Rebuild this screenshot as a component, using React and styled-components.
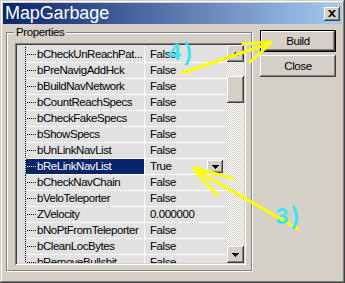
import React from "react";
import styled, { createGlobalStyle, css } from "styled-components";

const Global = createGlobalStyle`
  html, body { margin: 0; padding: 0; background: #D4D0C8; }
  body { font-family: "Liberation Sans", Arial, sans-serif; }
`;

const raised = css`
  box-shadow: inset -1px -1px #404040, inset 1px 1px #ffffff,
    inset -2px -2px #808080, inset 2px 2px #d4d0c8;
`;

const Window = styled.div`
  position: relative;
  width: 345px;
  height: 283px;
  box-sizing: border-box;
  padding: 3px;
  background: #d4d0c8;
  box-shadow: inset -1px -1px #404040, inset 1px 1px #d4d0c8,
    inset -2px -2px #808080, inset 2px 2px #ffffff;
  display: flex;
  flex-direction: column;
  overflow: hidden;
`;

const TitleBar = styled.div`
  height: 21px;
  display: flex;
  align-items: center;
  justify-content: space-between;
  padding: 0 2px 0 2px;
  background: linear-gradient(to right, #0a246a, #a6caf0);
`;

const TitleText = styled.span`
  color: #ffffff;
  font-size: 18px;
  line-height: 21px;
  letter-spacing: -0.1px;
`;

const CloseBox = styled.div`
  width: 16px;
  height: 14px;
  background: #d4d0c8;
  ${raised};
  display: flex;
  align-items: center;
  justify-content: center;
`;

const Body = styled.div`
  flex: 1;
  display: flex;
  align-items: flex-start;
  gap: 8px;
  padding: 6px 0 0 3px;
`;

const Group = styled.div`
  position: relative;
  margin-top: 2px;
  width: 246px;
  height: 239px;
  box-sizing: border-box;
  border: 1px solid #808080;
  box-shadow: inset 1px 1px #ffffff, 1px 1px #ffffff;
  padding: 10px 5px 5px 8px;
`;

const GroupLabel = styled.span`
  position: absolute;
  top: -8px;
  left: 7px;
  padding: 0 2px;
  background: #d4d0c8;
  font-size: 11.5px;
  line-height: 14px;
  letter-spacing: -0.4px;
  color: #000;
`;

const ListBox = styled.div`
  width: 231px;
  height: 222px;
  box-sizing: border-box;
  padding: 2px;
  background: #e1e1e1;
  box-shadow: inset 1px 1px #808080, inset -1px -1px #ffffff,
    inset 2px 2px #404040, inset -2px -2px #d4d0c8;
  display: flex;
`;

const Rows = styled.div`
  flex: 1;
  overflow: hidden;
  padding-top: 2px;
  background: #e1e1e1;
`;

const Row = styled.div`
  display: flex;
  height: 16px;
  font-size: 11.5px;
  letter-spacing: -0.45px;
  line-height: 15px;
`;

const Gutter = styled.div`
  width: 8px;
  flex: none;
`;

const TreeLine = styled.div`
  width: 1px;
  flex: none;
  background-color: ${(p) => (p.$sel ? "#0a246a" : "transparent")};
  background-image: repeating-linear-gradient(
    to bottom,
    ${(p) => (p.$sel ? "#ffffff" : "#000000")} 0 1px,
    transparent 1px 2px
  );
`;

const NameCell = styled.div`
  width: 107px;
  flex: none;
  box-sizing: content-box;
  height: 15px;
  padding-left: 11px;
  border-bottom: 1px solid #ffffff;
  border-right: 1px solid #ffffff;
  white-space: nowrap;
  overflow: hidden;
  color: ${(p) => (p.$sel ? "#ffffff" : "#000000")};
  background-color: ${(p) => (p.$sel ? "#0a246a" : "#e1e1e1")};
  background-image: repeating-linear-gradient(
    to right,
    transparent 0 1px,
    ${(p) => (p.$sel ? "#ffffff" : "#000000")} 1px 2px
  );
  background-size: 10px 1px;
  background-position: 0 7px;
  background-repeat: no-repeat;
`;

const ValueCell = styled.div`
  flex: 1;
  height: 15px;
  padding: 0 4px 0 5px;
  border-bottom: 1px solid #ffffff;
  display: flex;
  align-items: center;
  justify-content: space-between;
  color: #000;
  white-space: nowrap;
`;

const DropButton = styled.div`
  width: 16px;
  height: 13px;
  margin-top: 1px;
  align-self: flex-start;
  background: #d4d0c8;
  ${raised};
  display: flex;
  align-items: center;
  justify-content: center;
`;

const ScrollBar = styled.div`
  width: 17px;
  flex: none;
  display: flex;
  flex-direction: column;
`;

const ScrollButton = styled.div`
  width: 17px;
  height: 17px;
  flex: none;
  background: #d4d0c8;
  ${raised};
  display: flex;
  align-items: center;
  justify-content: center;
`;

const Track = styled.div`
  flex: 1;
  background-color: #ffffff;
  background-image: conic-gradient(
    #d4d0c8 25%,
    #ffffff 0 50%,
    #d4d0c8 0 75%,
    #ffffff 0
  );
  background-size: 2px 2px;
`;

const Thumb = styled.div`
  margin-top: 14px;
  height: 27px;
  background: #d4d0c8;
  ${raised};
`;

const ButtonColumn = styled.div`
  display: flex;
  flex-direction: column;
  gap: 3px;
  width: 76px;
`;

const PushButton = styled.button`
  width: 76px;
  height: 22px;
  padding: 0;
  margin: 0;
  box-sizing: border-box;
  font-family: "Liberation Sans", Arial, sans-serif;
  font-size: 11.5px;
  letter-spacing: -0.4px;
  color: #000;
  background: #d4d0c8;
  border: ${(p) => (p.$default ? "1px solid #000" : "none")};
  ${raised};
`;

const Overlay = styled.svg`
  position: absolute;
  left: 0;
  top: 0;
  pointer-events: none;
`;

const Note = styled.span`
  position: absolute;
  left: ${(p) => p.$x}px;
  top: ${(p) => p.$y}px;
  font-family: "Liberation Mono", "DejaVu Sans Mono", monospace;
  font-weight: bold;
  font-size: 23px;
  line-height: 22px;
  letter-spacing: -1px;
  color: #3fe4f2;
  pointer-events: none;
`;

const rows = [
  ["bCheckUnReachPat...", "False"],
  ["bPreNavigAddHck", "False"],
  ["bBuildNavNetwork", "False"],
  ["bCountReachSpecs", "False"],
  ["bCheckFakeSpecs", "False"],
  ["bShowSpecs", "False"],
  ["bUnLinkNavList", "False"],
  ["bReLinkNavList", "True", true],
  ["bCheckNavChain", "False"],
  ["bVeloTeleporter", "False"],
  ["ZVelocity", "0.000000"],
  ["bNoPtFromTeleporter", "False"],
  ["bCleanLocBytes", "False"],
  ["bRemoveBullshit", "False"],
];

const Down = () => (
  <svg width="7" height="4" viewBox="0 0 7 4">
    <path d="M0 0h7v1H0zM1 1h5v1H1zM2 2h3v1H2zM3 3h1v1H3z" fill="#000" />
  </svg>
);

const Up = () => (
  <svg width="7" height="4" viewBox="0 0 7 4">
    <path d="M3 0h1v1H3zM2 1h3v1H2zM1 2h5v1H1zM0 3h7v1H0z" fill="#000" />
  </svg>
);

export default function App() {
  return (
    <>
      <Global />
      <Window>
        <TitleBar>
          <TitleText>MapGarbage</TitleText>
          <CloseBox>
            <svg width="8" height="7" viewBox="0 0 8 7">
              <path
                d="M0 0h2l2 2 2-2h2L5 3.5 8 7H6L4 5 2 7H0l3-3.5z"
                fill="#000"
              />
            </svg>
          </CloseBox>
        </TitleBar>
        <Body>
          <Group>
            <GroupLabel>Properties</GroupLabel>
            <ListBox>
              <Rows>
                {rows.map(([name, value, sel]) => (
                  <Row key={name}>
                    <Gutter />
                    <TreeLine $sel={sel} />
                    <NameCell $sel={sel}>{name}</NameCell>
                    <ValueCell>
                      <span>{value}</span>
                      {sel && (
                        <DropButton>
                          <Down />
                        </DropButton>
                      )}
                    </ValueCell>
                  </Row>
                ))}
              </Rows>
              <ScrollBar>
                <ScrollButton>
                  <Up />
                </ScrollButton>
                <Track>
                  <Thumb />
                </Track>
                <ScrollButton>
                  <Down />
                </ScrollButton>
              </ScrollBar>
            </ListBox>
          </Group>
          <ButtonColumn>
            <PushButton $default>Build</PushButton>
            <PushButton>Close</PushButton>
          </ButtonColumn>
        </Body>
        <Overlay width="345" height="283" viewBox="0 0 345 283">
          <g
            stroke="#ffff00"
            strokeWidth="3"
            strokeLinecap="round"
            fill="none"
          >
            <path d="M182 73 L271 43" />
            <path d="M243 44 L270 42" />
            <path d="M250 62 L269 45" />
            <path d="M194 169 L298 229" />
            <path d="M194 168 L232 178" />
            <path d="M196 172 L217 195" />
          </g>
        </Overlay>
        <Note $x={168} $y={43}>4)</Note>
        <Note $x={275} $y={207}>3)</Note>
      </Window>
    </>
  );
}
